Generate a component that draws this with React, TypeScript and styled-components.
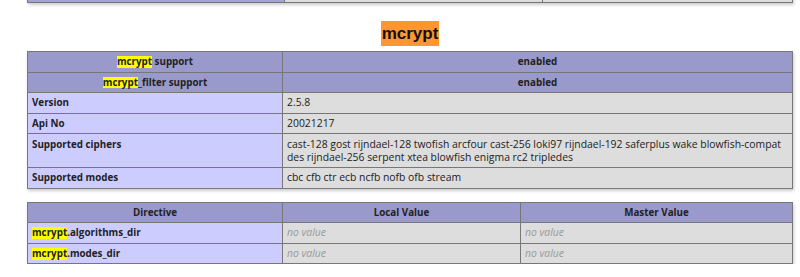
import React from "react";
import styled, { createGlobalStyle } from "styled-components";

const GlobalStyle = createGlobalStyle`
  html, body {
    margin: 0;
    padding: 0;
    background: #fff;
  }
  body {
    font-family: "Open Sans", "Liberation Sans", Arial, sans-serif;
    color: #222;
  }
`;

const Page = styled.div`
  width: 766px;
  margin-left: 27px;
`;

const Table = styled.table<{ $gap?: number }>`
  border-collapse: collapse;
  border: 0;
  width: 766px;
  table-layout: fixed;
  box-shadow: 1px 2px 3px #ccc;
  margin-top: ${(p) => p.$gap ?? 0}px;
`;

const PrevTable = styled(Table)`
  margin-top: -19px;
`;

const Cell = styled.td<{ $kind: "h" | "e" | "v"; $w?: number }>`
  border: 1px solid #777;
  font-size: ${(p) => (p.$kind === "v" ? "10.4px" : "9.8px")};
  line-height: 13px;
  padding: 3.3px 4px;
  vertical-align: baseline;
  text-align: ${(p) => (p.$kind === "h" ? "center" : "left")};
  font-weight: ${(p) => (p.$kind === "v" ? "normal" : "bold")};
  background: ${(p) =>
    p.$kind === "h" ? "#9999cc" : p.$kind === "e" ? "#ccccff" : "#dddddd"};
  color: #222;
  width: ${(p) => (p.$w ? `${p.$w}px` : "auto")};
  box-sizing: border-box;
`;

const PrevCell = styled.td<{ $purple?: boolean; $w?: number }>`
  border: 1px solid #777;
  height: 20px;
  padding: 0;
  background: ${(p) => (p.$purple ? "#a3a3d6" : "#dddddd")};
  width: ${(p) => (p.$w ? `${p.$w}px` : "auto")};
`;

const Title = styled.h2`
  margin: 0;
  padding: 18px 0 5px;
  text-align: center;
  font-family: "Liberation Sans", Arial, sans-serif;
  font-size: 17px;
  font-weight: bold;
  line-height: 25px;
  height: 25px;
  color: #111;
`;

const ActiveMark = styled.span`
  display: inline-block;
  background: #ff9632;
  padding: 0 1px;
  height: 25px;
  line-height: 25px;
`;

const Mark = styled.span`
  display: inline-block;
  background: #ffff00;
  line-height: 11.5px;
`;

const NoValue = styled.i`
  color: #999;
`;

const TitleRow = ({
  name,
  value,
  w,
}: {
  name: React.ReactNode;
  value: string;
  w?: number;
}) => (
  <tr>
    <Cell as="th" $kind="h" $w={w}>
      {name}
    </Cell>
    <Cell as="th" $kind="h">
      {value}
    </Cell>
  </tr>
);

const InfoRow = ({ name, value }: { name: string; value: string }) => (
  <tr>
    <Cell $kind="e">{name}</Cell>
    <Cell $kind="v">{value}</Cell>
  </tr>
);

const DirectiveRow = ({ name }: { name: string }) => (
  <tr>
    <Cell $kind="e">
      <Mark>mcrypt</Mark>.{name}
    </Cell>
    <Cell $kind="v">
      <NoValue>no value</NoValue>
    </Cell>
    <Cell $kind="v">
      <NoValue>no value</NoValue>
    </Cell>
  </tr>
);

export default function App() {
  return (
    <>
      <GlobalStyle />
      <Page>
        <PrevTable>
          <tbody>
            <tr>
              <PrevCell $purple $w={256} />
              <PrevCell $w={257} />
              <PrevCell />
            </tr>
          </tbody>
        </PrevTable>
        <Title>
          <ActiveMark>mcrypt</ActiveMark>
        </Title>
        <Table>
          <tbody>
            <TitleRow
              w={255}
              name={
                <>
                  <Mark>mcrypt</Mark> support
                </>
              }
              value="enabled"
            />
            <TitleRow
              name={
                <>
                  <Mark>mcrypt</Mark>_filter support
                </>
              }
              value="enabled"
            />
            <InfoRow name="Version" value="2.5.8" />
            <InfoRow name="Api No" value="20021217" />
            <InfoRow
              name="Supported ciphers"
              value="cast-128 gost rijndael-128 twofish arcfour cast-256 loki97 rijndael-192 saferplus wake blowfish-compat des rijndael-256 serpent xtea blowfish enigma rc2 tripledes"
            />
            <InfoRow name="Supported modes" value="cbc cfb ctr ecb ncfb nofb ofb stream" />
          </tbody>
        </Table>
        <Table $gap={13}>
          <thead>
            <tr>
              <Cell as="th" $kind="h" $w={255}>
                Directive
              </Cell>
              <Cell as="th" $kind="h" $w={238}>
                Local Value
              </Cell>
              <Cell as="th" $kind="h">
                Master Value
              </Cell>
            </tr>
          </thead>
          <tbody>
            <DirectiveRow name="algorithms_dir" />
            <DirectiveRow name="modes_dir" />
          </tbody>
        </Table>
      </Page>
    </>
  );
}
